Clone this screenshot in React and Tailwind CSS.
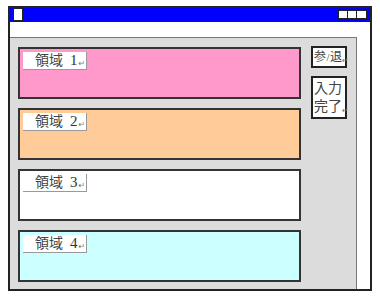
import React from "react";

const serif = { fontFamily: '"Liberation Serif", "Noto Sans CJK JP", serif' };

function Ret({ cls = "" }) {
  return (
    <span className={`text-[8px] leading-none text-[#777] self-end mb-[1px] ${cls}`} style={{ fontFamily: '"DejaVu Sans", sans-serif' }}>↵</span>
  );
}

function Region({ bg, n }) {
  return (
    <div className={`h-[52px] w-[283px] border-2 border-[#333] ${bg} pl-[3px] pt-[3px]`}>
      <div className="w-[64px] h-[18px] bg-white border-r border-b border-[#999] flex items-center pl-[12px] text-[14px] leading-none text-[#444] whitespace-nowrap" style={serif}>
        <span>領域</span>
        <span className="ml-[7px] text-[15px] text-[#333]">{n}</span>
        <Ret cls="ml-[1px]" />
      </div>
    </div>
  );
}

export default function App() {
  return (
    <div className="w-[380px] h-[298px] bg-white pt-[6px] pl-[8px]">
      <div className="w-[364px] h-[285px] border-2 border-[#222] flex flex-col bg-white">
        <div className="h-[14px] bg-[#0000ff] border-b border-[#222] flex items-start justify-between shrink-0">
          <div className="ml-[3px] w-[10px] h-[13px] bg-white border border-[#222]" />
          <div className="mt-[2px] mr-[3px] flex h-[9px] border border-[#222]">
            <div className="w-[9px] bg-white border-r border-[#222]" />
            <div className="w-[9px] bg-white border-r border-[#222]" />
            <div className="w-[9px] bg-white" />
          </div>
        </div>
        <div className="h-[15px] bg-white shrink-0" />
        <div className="flex flex-1">
          <div className="w-[347px] bg-[#dcdcdc] border-t border-r border-[#777] flex pt-[9px] pl-[8px] gap-[10px]">
            <div className="flex flex-col gap-[9px]">
              <Region bg="bg-[#ff99cc]" n="1" />
              <Region bg="bg-[#ffcc99]" n="2" />
              <Region bg="bg-white" n="3" />
              <Region bg="bg-[#ccffff]" n="4" />
            </div>
            <div className="flex flex-col gap-[8px] -mt-[1px]">
              <div className="w-[36px] h-[22px] bg-white border-2 border-[#222] flex items-center pl-[1px] text-[12px] leading-none text-[#444] whitespace-nowrap" style={serif}>
                <span>参</span>
                <span className="text-[11px] mx-[0.5px]">/</span>
                <span>退</span>
                <Ret />
              </div>
              <div className="w-[36px] h-[43px] bg-white border-2 border-[#222] flex flex-col items-start justify-center pl-[1px] text-[14px] leading-[18px] text-[#444] whitespace-nowrap" style={serif}>
                <span>入力</span>
                <span className="flex items-end">完了<Ret /></span>
              </div>
            </div>
          </div>
          <div className="flex-1 bg-white" />
        </div>
      </div>
    </div>
  );
}
